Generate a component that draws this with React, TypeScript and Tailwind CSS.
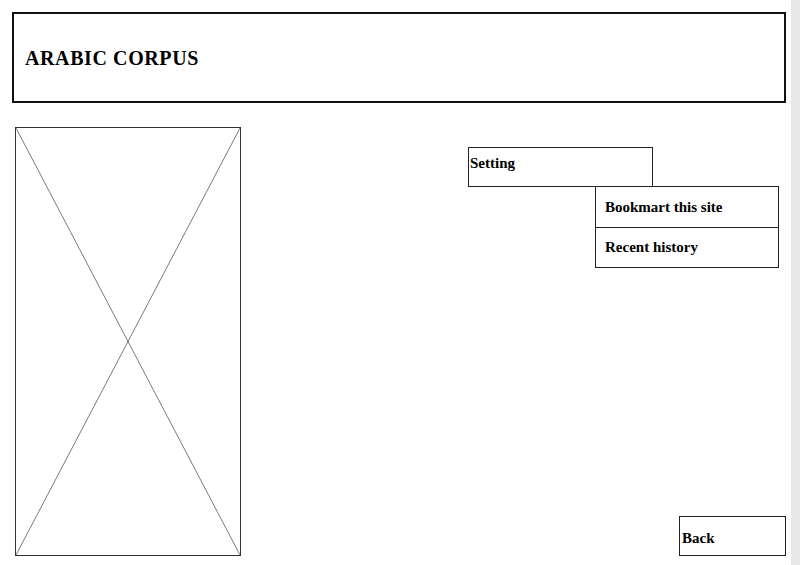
export default function App() {
  return (
    <div className="flex h-[565px] w-[800px] overflow-hidden bg-white font-['Liberation_Serif',serif] text-black">
      <div className="flex w-[791px] flex-col pl-[12px] pr-[5px] pt-[12px]">
        <header className="flex h-[91px] items-center border-2 border-[#111] pl-[11px] pt-[1px]">
          <h1 className="text-[20px] font-bold tracking-[0.6px]">ARABIC CORPUS</h1>
        </header>

        <div className="mt-[24px] flex h-[429px]">
          <div className="ml-[3px] h-full w-[226px] border border-[#333]">
            <svg className="block h-full w-full" viewBox="0 0 100 100" preserveAspectRatio="none">
              <line x1="0" y1="0" x2="100" y2="100" stroke="#7a7a7a" strokeWidth="1" vectorEffect="non-scaling-stroke" />
              <line x1="100" y1="0" x2="0" y2="100" stroke="#7a7a7a" strokeWidth="1" vectorEffect="non-scaling-stroke" />
            </svg>
          </div>

          <div className="flex flex-1 flex-col">
            <div className="pl-[227px] pt-[20px]">
              <div className="h-[40px] w-[185px] border border-[#222] pl-[1px] pt-[5px] text-[15px] font-bold leading-[20px]">
                Setting
              </div>
              <div className="-mt-[1px] ml-[127px] w-[184px] border border-[#222] text-[15px] font-bold">
                <div className="flex h-[41px] items-center border-b border-[#222] pl-[9px]">Bookmart this site</div>
                <div className="flex h-[39px] items-center pl-[9px]">Recent history</div>
              </div>
            </div>

            <button className="mt-auto flex h-[40px] w-[107px] items-center self-end border border-[#222] pl-[2px] pt-[4px] text-[15px] font-bold">
              Back
            </button>
          </div>
        </div>
      </div>
      <div className="w-[9px] bg-[#e8e8e8]" />
    </div>
  );
}
